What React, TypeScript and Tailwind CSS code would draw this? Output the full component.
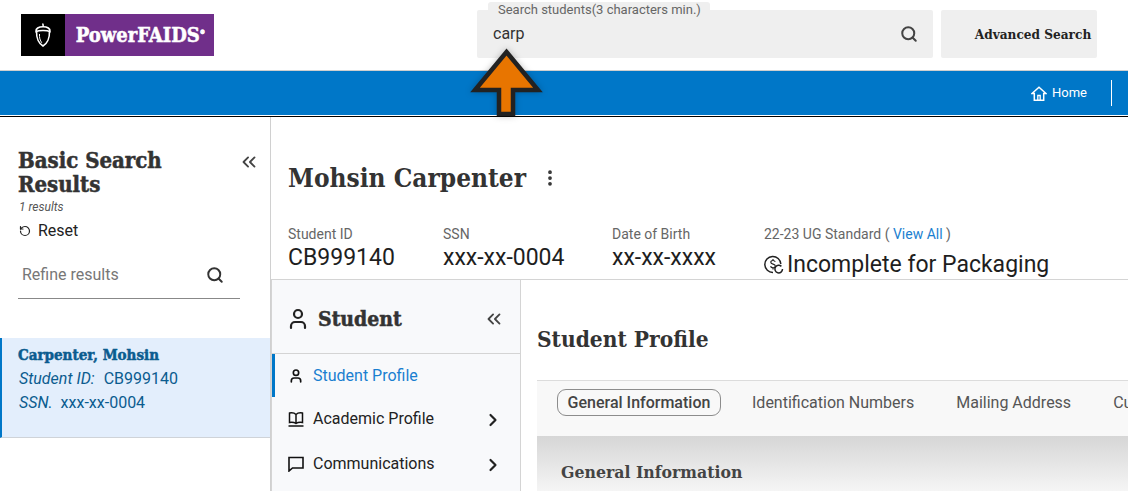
import { ChevronRight, ChevronsLeft, EllipsisVertical, RotateCcw, Search, User } from "lucide-react";

const slab = "font-['DejaVu_Serif_Condensed','DejaVu_Serif',serif] font-bold";
const heavy = "[-webkit-text-stroke:0.5px_currentColor]";

function Acorn() {
  return (
    <svg width="20" height="26" viewBox="0 0 20 26" fill="none" stroke="white" strokeWidth="1.600">
      <path d="M10 1.500c-.3 1.400 0 2.400.6 3.200" />
      <path d="M3 9.500C2.600 6.500 5.600 4.700 10 4.700s7.400 1.800 7 4.800c-3-1.400-11-1.400-14 0Z" />
      <path d="M3.600 10c-.4 6 2.400 11.500 6.400 14 4-2.500 6.800-8 6.400-14" />
      <path d="M6.500 12c-.3 3.500.6 6.500 2.300 8.800" strokeWidth="1" />
    </svg>
  );
}

function HomeIcon() {
  return (
    <svg width="16" height="15" viewBox="0 0 16 15" fill="none" stroke="white" strokeWidth="1.500" className="mr-[5px]">
      <path d="M1 7.500 8 1.200l7 6.300h-2.300v6.700H3.300V7.500Z" />
      <path d="M6.800 14V9.500h2.400V14" strokeWidth="1.300" />
    </svg>
  );
}

function BookIcon() {
  return (
    <svg width="16" height="16" viewBox="0 0 16 16" fill="none" stroke="#111" strokeWidth="1.500">
      <path d="M8 3.500C6.500 2 4 1.500 1.500 2v9.500C4 11 6.500 11.500 8 12.500c1.500-1 4-1.500 6.500-1V2C12 1.500 9.500 2 8 3.500Zm0 0v9" />
      <path d="M.5 15h15" />
    </svg>
  );
}

function CommentIcon() {
  return (
    <svg width="16" height="16" viewBox="0 0 16 16" fill="none" stroke="#111" strokeWidth="1.600">
      <path d="M1 1.500h14v10.500H4.500L1 15Z" />
    </svg>
  );
}

function PackagingIcon() {
  return (
    <svg width="20" height="20" viewBox="0 0 20 20" fill="none" stroke="#222" strokeWidth="1.500">
      <path d="M9 17.500A8 8 0 1 1 16.800 9" />
      <path d="M11.300 6.800c-.5-.9-1.300-1.300-2.300-1.300-1.300 0-2.200.7-2.200 1.800 0 2.500 4.500 1.300 4.500 3.700 0 1.100-1 1.800-2.300 1.800-1.100 0-2-.5-2.500-1.400M9 4v1.500M9 13v1.500" strokeWidth="1.200" />
      <path d="M18.500 14a3.800 3.800 0 1 1-1.100-2.600" />
    </svg>
  );
}

function Stat({ label, value }: { label: string; value: string }) {
  return (
    <div>
      <div className="text-[14px] leading-[16px] text-[#666]">{label}</div>
      <div className="mt-[1px] text-[23px] leading-[30px] text-[#1e1e1e]">{value}</div>
    </div>
  );
}

function NavItem({ icon, label }: { icon: React.ReactNode; label: string }) {
  return (
    <div className="flex h-[45px] items-center pl-[16px] pr-[17px] text-[16px] text-[#222]">
      <span className="mr-[9px] flex w-[16px] justify-center">{icon}</span>
      <span className="flex-1">{label}</span>
      <ChevronRight size={20} strokeWidth={2.600} className="mt-[3px]" />
    </div>
  );
}

export default function App() {
  return (
    <div className="relative h-[491px] w-[1128px] overflow-hidden bg-white font-['Roboto',sans-serif]">
      {/* top header */}
      <header className="flex h-[71px] items-start border-b border-[#cfcfcf] pt-[10px]">
        <div className="ml-[21px] mt-[4px] flex h-[42px] w-[193px]">
          <div className="flex w-[44px] items-center justify-center bg-black">
            <Acorn />
          </div>
          <div className={`flex flex-1 items-center justify-center bg-[#702f8a] pl-[2px] text-[20px] text-white ${slab} ${heavy}`}>
            PowerFAIDS<sup className="text-[6px]">®</sup>
          </div>
        </div>
        <div className="relative ml-[263px] flex h-[48px] w-[456px] items-center justify-between rounded-[2px] bg-[#efefef] pl-[16px] pr-[15px]">
          <span className="absolute left-[11px] top-[-8px] rounded-t-[3px] bg-[#efefef] pl-[10px] pr-[9px] text-[13px] leading-[16px] text-[#666]">
            Search students(3 characters min.)
          </span>
          <span className="text-[16px] text-[#333]">carp</span>
          <Search size={18} strokeWidth={2.700} className="text-[#444]" />
        </div>
        <div className={`ml-[8px] flex h-[48px] w-[156px] items-center justify-center rounded-[2px] bg-[#efefef] pl-[28px] text-[13.500px] text-[#222] ${slab}`}>
          Advanced Search
        </div>
      </header>

      {/* blue nav */}
      <nav className="flex h-[44px] items-center justify-end bg-[#0077c8] pr-[16px] text-[13px] text-white">
        <HomeIcon />
        <span>Home</span>
        <span className="ml-[24px] h-[26px] w-px bg-white" />
      </nav>
      <div className="mt-px h-px bg-black" />

      <div className="flex">
        {/* search results */}
        <aside className="h-[375px] w-[271px] shrink-0 border-r border-[#d0d0d0] pt-[31px]">
          <div className="flex items-start justify-between pl-[18px] pr-[10px]">
            <h2 className={`w-[170px] text-[22px] leading-[24px] text-[#333] ${slab} ${heavy}`}>Basic Search Results</h2>
            <ChevronsLeft size={22} strokeWidth={2} className="mt-[3px] text-[#444]" />
          </div>
          <div className="mt-[1px] pl-[19px] text-[12px] italic leading-[20px] text-[#555]">1 results</div>
          <div className="mt-[2px] flex items-center pl-[19px] text-[16px] leading-[24px] text-[#222]">
            <RotateCcw size={12} strokeWidth={2.400} className="mr-[7px]" />
            Reset
          </div>
          <div className="ml-[18px] mt-[20px] flex h-[36px] w-[222px] items-start justify-between border-b border-[#888] pl-[4px] pr-[16px] text-[16px] leading-[24px] text-[#777]">
            Refine results
            <Search size={18} strokeWidth={2.600} className="mt-[3px] text-[#333]" />
          </div>
          <div className="mt-[39px] h-[100px] border-b border-l-2 border-b-[#cfd3d8] border-l-[#0077c8] bg-[#e3eefc] pl-[16px] pt-[7px] text-[#0b5c8f]">
            <div className={`text-[15px] leading-[20px] ${slab} ${heavy}`}>Carpenter, Mohsin</div>
            <div className="ml-[1px] mt-[2px] text-[16px] leading-[24px]">
              <i className="mr-[9px]">Student ID:</i>CB999140
            </div>
            <div className="ml-[1px] text-[16px] leading-[24px]">
              <i className="mr-[8px]">SSN.</i>xxx-xx-0004
            </div>
          </div>
        </aside>

        <main className="min-w-0 flex-1">
          {/* student summary */}
          <div className="h-[163px] border-b border-[#d4d4d4] pl-[17px] pt-[43px]">
            <div className="flex items-center">
              <h1 className={`text-[26px] leading-[36px] text-[#333] ${slab}`}>Mohsin Carpenter</h1>
              <EllipsisVertical size={20} strokeWidth={2.500} className="ml-[14px] text-[#333]" />
            </div>
            <div className="mt-[30px] flex">
              <div className="w-[155px]"><Stat label="Student ID" value="CB999140" /></div>
              <div className="w-[169px]"><Stat label="SSN" value="xxx-xx-0004" /></div>
              <div className="w-[152px]"><Stat label="Date of Birth" value="xx-xx-xxxx" /></div>
              <div>
                <div className="text-[14px] leading-[16px] text-[#666]">
                  22-23 UG Standard ( <span className="text-[#1a7fd0]">View All</span> )
                </div>
                <div className="mt-[8px] flex items-center text-[23px] leading-[30px] text-[#1e1e1e]">
                  <PackagingIcon />
                  <span className="ml-[3px]">Incomplete for Packaging</span>
                </div>
              </div>
            </div>
          </div>

          <div className="flex">
            {/* student nav */}
            <div className="h-[212px] w-[250px] shrink-0 border-x border-[#d4d4d4] bg-[#f8f9fb]">
              <div className="flex h-[74px] items-center border-b border-[#d4d4d4] pl-[14px] pr-[15px] pt-[4px]">
                <User size={24} strokeWidth={2.200} className="mr-[8px] text-[#222]" />
                <span className={`flex-1 text-[21px] text-[#333] ${slab} ${heavy}`}>Student</span>
                <ChevronsLeft size={22} strokeWidth={2} className="text-[#444]" />
              </div>
              <div className="flex h-[43px] items-center border-l-[3px] border-[#0077c8] pl-[13px] text-[16px] text-[#1a7fd0]">
                <span className="mr-[9px] flex w-[16px] justify-center">
                  <User size={20} strokeWidth={2.500} className="text-[#111]" />
                </span>
                Student Profile
              </div>
              <div className="-mt-px">
                <NavItem icon={<BookIcon />} label="Academic Profile" />
                <NavItem icon={<CommentIcon />} label="Communications" />
              </div>
            </div>

            {/* profile content */}
            <div className="min-w-0 flex-1 overflow-hidden pl-[16px] pt-[42px]">
              <h2 className={`h-[58px] text-[22.500px] leading-[34px] text-[#333] ${slab}`}>Student Profile</h2>
              <div className="flex h-[56px] items-start whitespace-nowrap border-t border-[#dcdcdc] bg-[#f8f8f8] pl-[20px] pt-[8px] text-[16px] leading-[27px] text-[#555]">
                <span className="flex h-[27px] w-[164px] shrink-0 items-center justify-center rounded-[9px] border border-[#8c8c8c] font-medium text-[#444]">
                  General Information
                </span>
                <span className="ml-[31px]">Identification Numbers</span>
                <span className="ml-[42px]">Mailing Address</span>
                <span className="ml-[42px]">Current Address</span>
              </div>
              <div className="h-[60px] bg-gradient-to-b from-[#d6d6d6] to-[#f8f8f8] pl-[24px] pt-[25px]">
                <h3 className={`text-[17.500px] leading-[22px] text-[#444] ${slab}`}>General Information</h3>
              </div>
            </div>
          </div>
        </main>
      </div>

      {/* callout arrow */}
      <svg className="absolute left-[470px] top-[47px] drop-shadow-[0_0_3px_rgba(0,0,0,0.25)]" width="73" height="71" viewBox="0 0 73 71">
        <path d="M36.500 5 L68 43 L43 43 L43 67 L29 67 L29 43 L5 43 Z" fill="#e87500" stroke="#222" strokeWidth="4.500" strokeLinejoin="miter" />
      </svg>
    </div>
  );
}
